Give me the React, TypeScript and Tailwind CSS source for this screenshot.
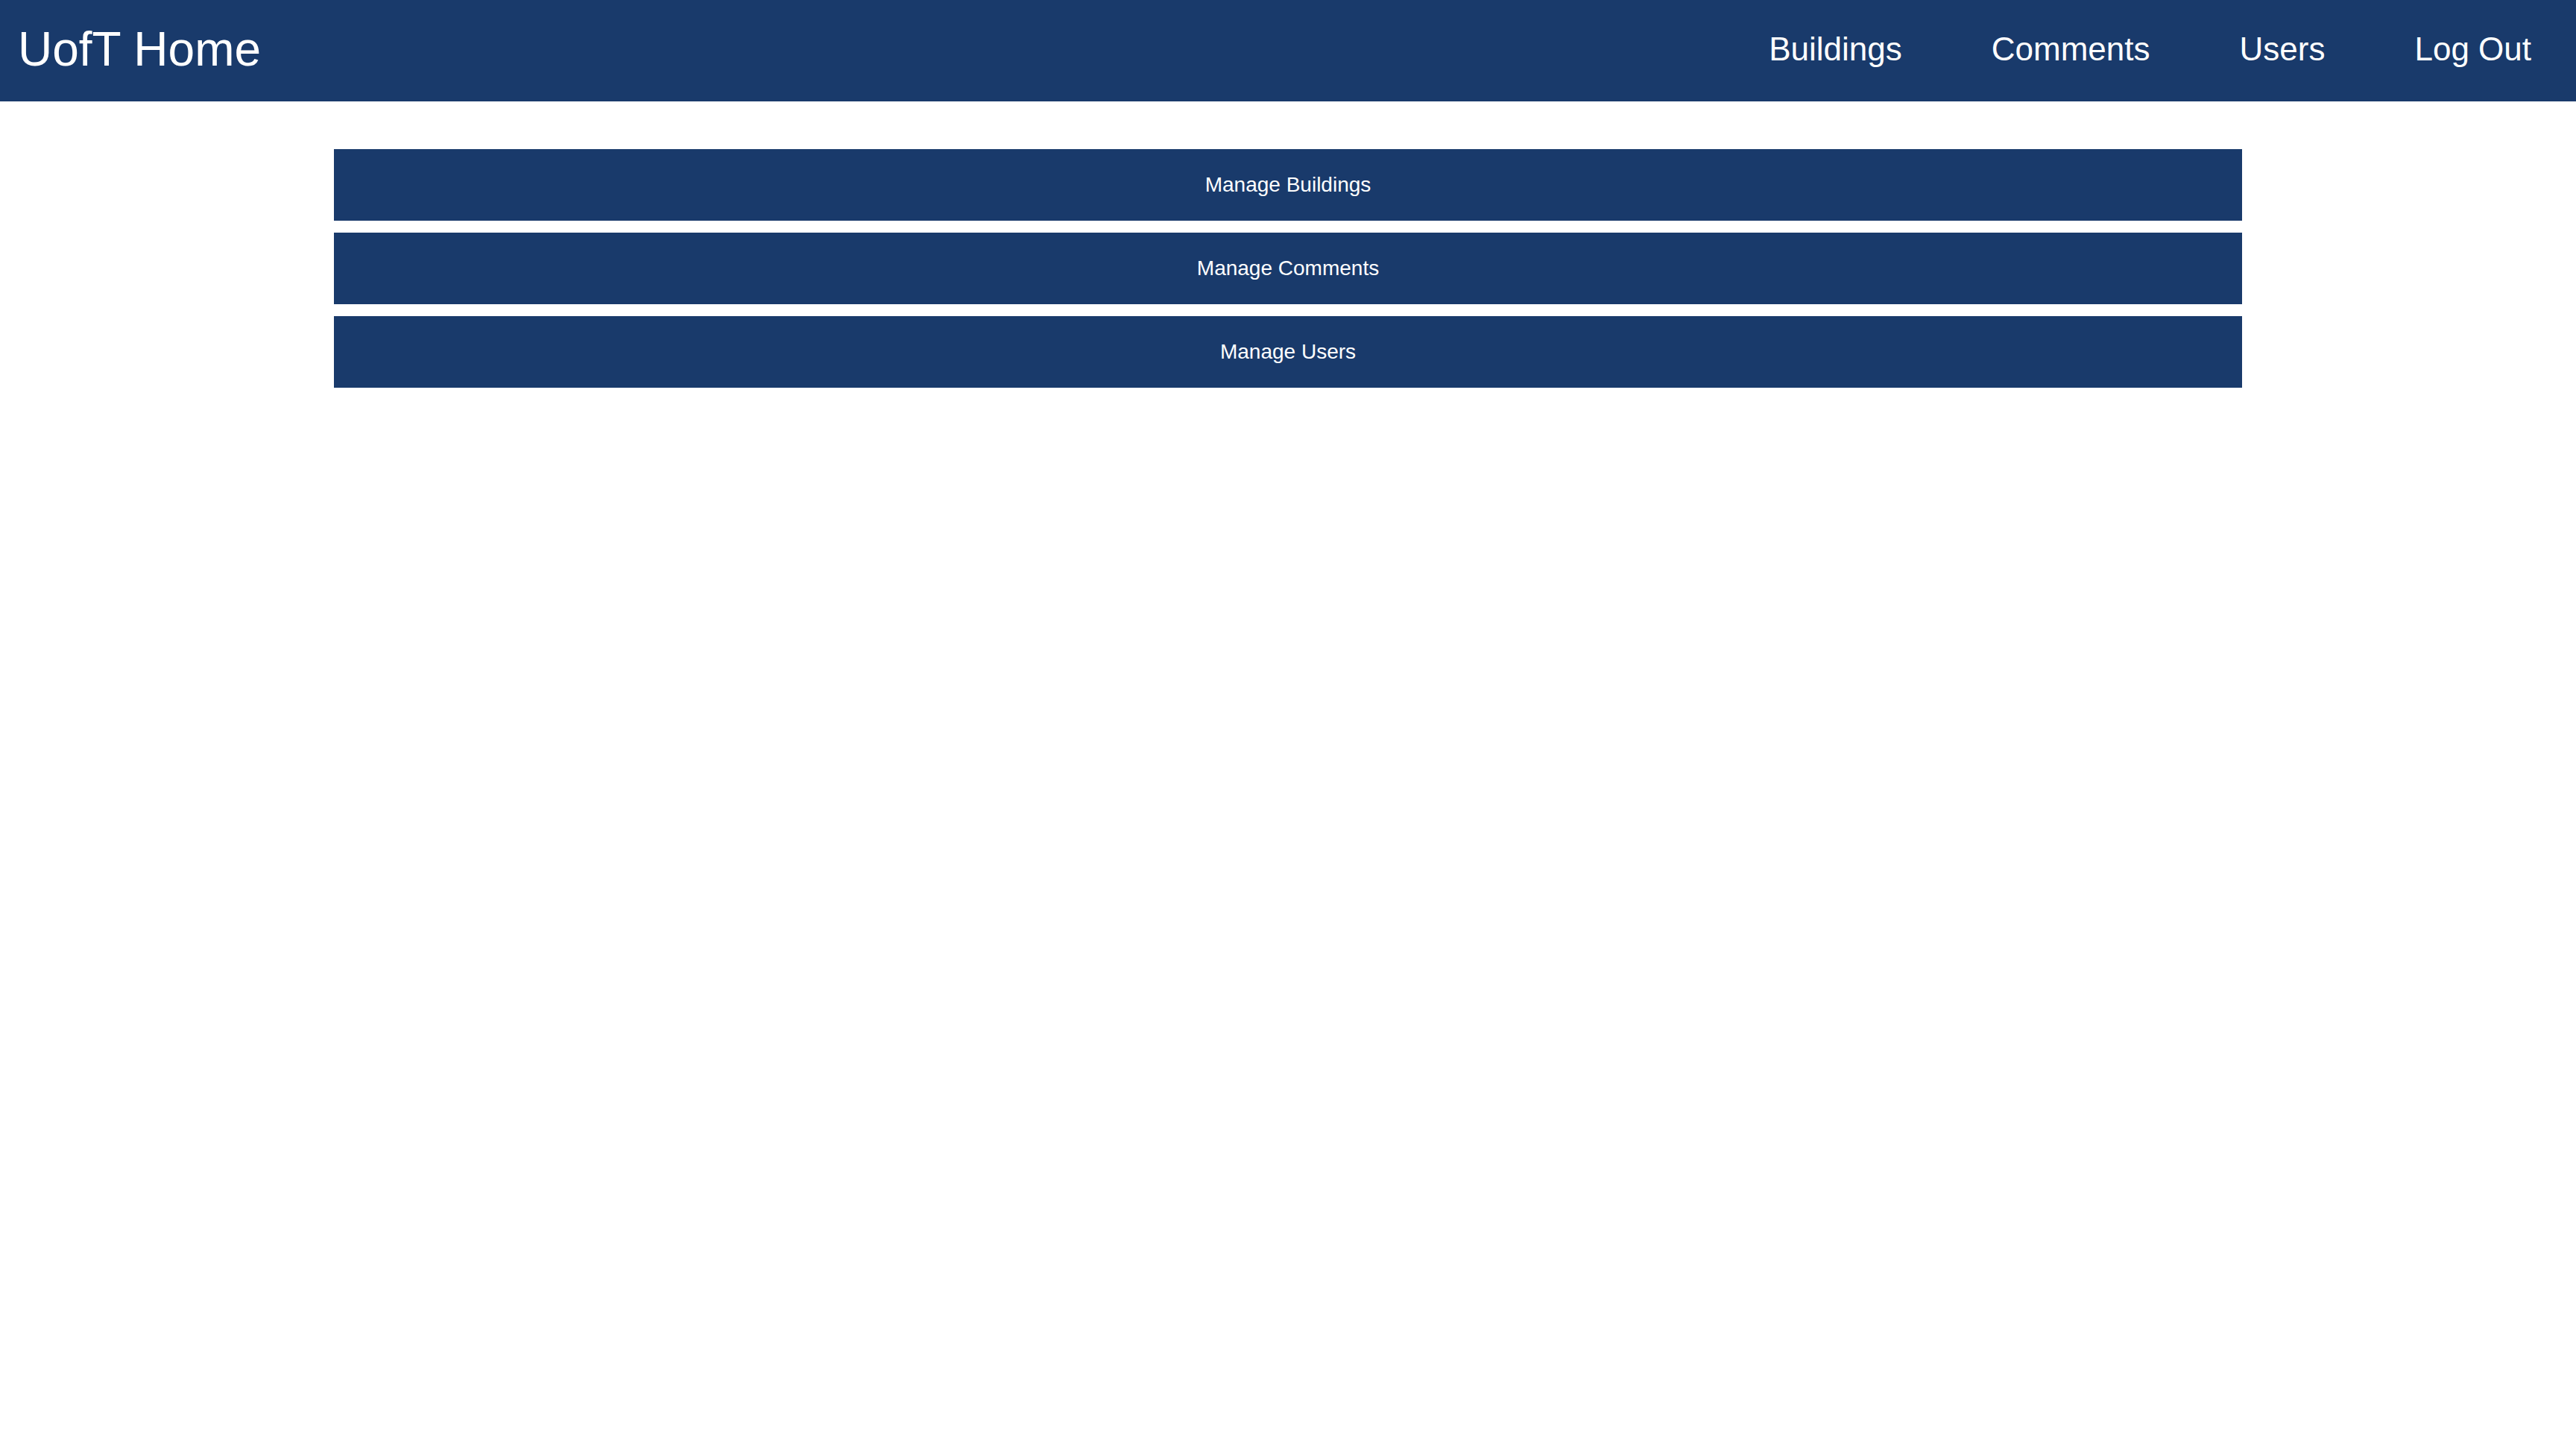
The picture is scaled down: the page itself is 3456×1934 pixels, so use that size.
const links = ['Buildings', 'Comments', 'Users', 'Log Out'];

const actions = ['Manage Buildings', 'Manage Comments', 'Manage Users'];

const Header = () => (
  <header className="flex h-[136px] items-center justify-between bg-[#193a6b] pb-1 text-white">
    <h1 className="pl-6 text-[64px] leading-none font-normal">UofT Home</h1>
    <nav className="flex items-center">
      {links.map((link) => (
        <a key={link} href="#" className="px-[60px] text-[44px] leading-none text-white">
          {link}
        </a>
      ))}
    </nav>
  </header>
);

export default function App() {
  return (
    <div className="min-h-screen bg-white font-['Liberation_Sans',Arial,sans-serif]">
      <Header />
      <main className="mx-auto mt-16 flex w-[2560px] flex-col gap-4">
        {actions.map((label) => (
          <button
            key={label}
            className="h-24 w-full bg-[#193a6b] text-[28px] text-white"
          >
            {label}
          </button>
        ))}
      </main>
    </div>
  );
}
